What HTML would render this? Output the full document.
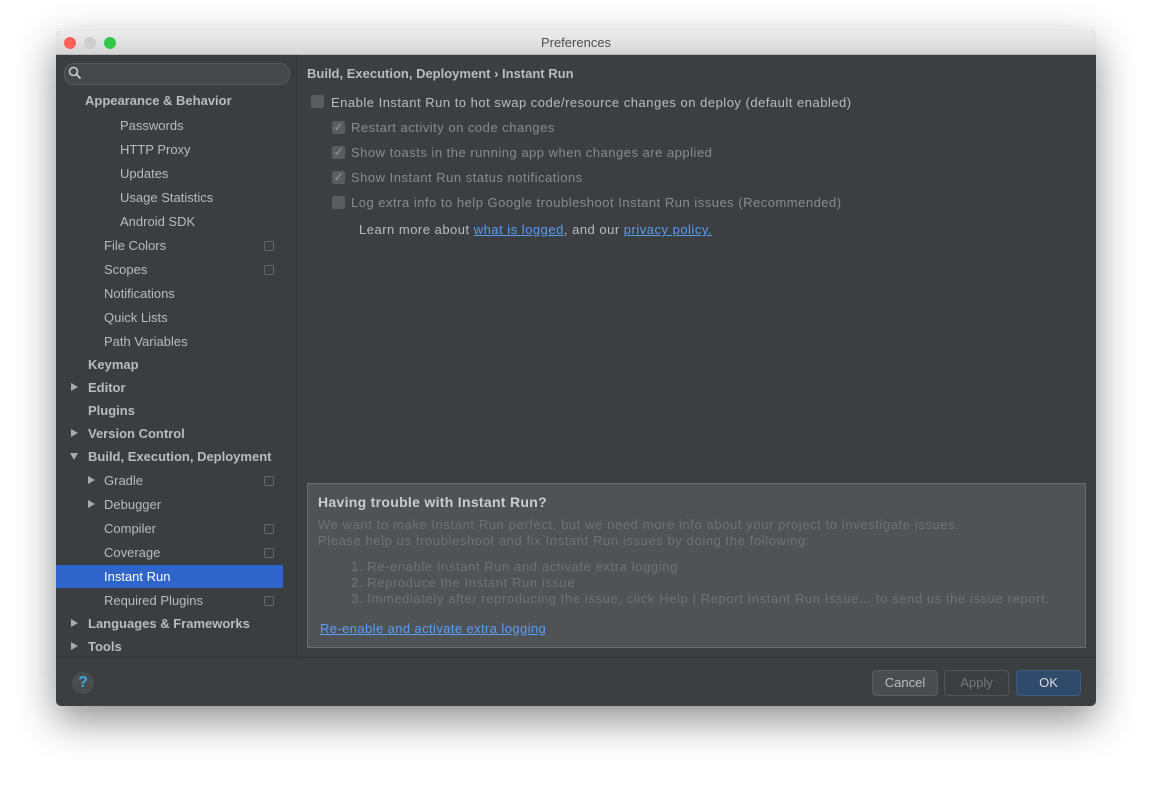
<!DOCTYPE html>
<html><head><style>
body{margin:0;width:1152px;height:786px;background:#fff;position:relative;font-family:"Liberation Sans",sans-serif;font-size:13px;overflow:hidden}
.win{position:absolute;left:56px;top:31px;width:1040px;height:675px;background:#3c3f41;border-radius:5px;box-shadow:0 14px 40px rgba(0,0,0,.45);overflow:hidden}
.title{position:absolute;left:0;top:0;width:1040px;height:23px;background:linear-gradient(#ececec,#d6d6d6);border-bottom:1px solid #b5b5b5;text-align:center;line-height:23px;color:#4d4d4d;font-size:13px}
.dot{position:absolute;top:6px;width:12px;height:12px;border-radius:50%}
.side{position:absolute;left:0;top:24px;width:240px;height:602px;background:#3b3e40}
.sep{position:absolute;left:240px;top:24px;width:1px;height:602px;background:#2f3133}
.t{position:absolute;color:#bbbbbb;white-space:nowrap}
.b{font-weight:bold}
.m{letter-spacing:0.5px}
.arr{position:absolute;width:0;height:0;border-left:7px solid #aaa;border-top:4px solid transparent;border-bottom:4px solid transparent}
.arrd{position:absolute;width:0;height:0;border-top:7px solid #aaa;border-left:4px solid transparent;border-right:4px solid transparent}
.ic{position:absolute;left:208px;width:8px;height:8px;border:1px solid #666;border-radius:2px}
.cb{position:absolute;width:13px;height:13px;background:#5a5d5f;border-radius:2px;color:#999;font-size:12px;line-height:13px;text-align:center}
.g{color:#8a8a8a}
a{color:#589df6;text-decoration:underline}
.box{position:absolute;left:251px;top:452px;width:777px;height:163px;background:#505355;border:1px solid #6a6d70}
.bx{color:#6f7274;font-size:13px;letter-spacing:0.6px}
.btn{position:absolute;top:639px;height:24px;border-radius:4px;text-align:center;line-height:24px;font-size:13px}
</style></head><body>
<div class="win">
<div class="title">Preferences
<div class="dot" style="left:8px;background:#fc605b"></div>
<div class="dot" style="left:28px;background:#cfcfcf"></div>
<div class="dot" style="left:48px;background:#34c84a"></div>
</div>
<div class="side">
<div style="position:absolute;left:8px;top:8px;width:224px;height:20px;border-radius:10px;background:#45484a;border:1px solid #55585a"></div>
<svg style="position:absolute;left:12px;top:11px" width="14" height="14"><circle cx="5.5" cy="5.5" r="4" stroke="#ccc" stroke-width="1.6" fill="none"/><line x1="8.5" y1="8.5" x2="12.5" y2="12.5" stroke="#ccc" stroke-width="1.8"/></svg>
<div style="position:absolute;left:0;top:510px;width:227px;height:23px;background:#2f65ca"></div>
</div>
<div class="sep"></div>
<div class="t b" style="left:29px;top:62px">Appearance &amp; Behavior</div>
<div class="t" style="left:64px;top:87px">Passwords</div>
<div class="t" style="left:64px;top:111px">HTTP Proxy</div>
<div class="t" style="left:64px;top:135px">Updates</div>
<div class="t" style="left:64px;top:159px">Usage Statistics</div>
<div class="t" style="left:64px;top:183px">Android SDK</div>
<div class="t" style="left:48px;top:207px">File Colors</div><div class="ic" style="top:210px"></div>
<div class="t" style="left:48px;top:231px">Scopes</div><div class="ic" style="top:234px"></div>
<div class="t" style="left:48px;top:255px">Notifications</div>
<div class="t" style="left:48px;top:279px">Quick Lists</div>
<div class="t" style="left:48px;top:303px">Path Variables</div>
<div class="t b" style="left:32px;top:326px">Keymap</div>
<div class="arr" style="left:15px;top:352px"></div><div class="t b" style="left:32px;top:349px">Editor</div>
<div class="t b" style="left:32px;top:372px">Plugins</div>
<div class="arr" style="left:15px;top:398px"></div><div class="t b" style="left:32px;top:395px">Version Control</div>
<div class="arrd" style="left:14px;top:422px"></div><div class="t b" style="left:32px;top:418px">Build, Execution, Deployment</div>
<div class="arr" style="left:32px;top:445px"></div><div class="t" style="left:48px;top:442px">Gradle</div><div class="ic" style="top:445px"></div>
<div class="arr" style="left:32px;top:469px"></div><div class="t" style="left:48px;top:466px">Debugger</div>
<div class="t" style="left:48px;top:490px">Compiler</div><div class="ic" style="top:493px"></div>
<div class="t" style="left:48px;top:514px">Coverage</div><div class="ic" style="top:517px"></div>
<div class="t" style="left:48px;top:538px;color:#fff">Instant Run</div>
<div class="t" style="left:48px;top:562px">Required Plugins</div><div class="ic" style="top:565px"></div>
<div class="arr" style="left:15px;top:588px"></div><div class="t b" style="left:32px;top:585px">Languages &amp; Frameworks</div>
<div class="arr" style="left:15px;top:611px"></div><div class="t b" style="left:32px;top:608px">Tools</div>

<div class="t b" style="left:251px;top:35px">Build, Execution, Deployment › Instant Run</div>
<div class="cb" style="left:255px;top:64px"></div><div class="t m" style="left:275px;top:64px">Enable Instant Run to hot swap code/resource changes on deploy (default enabled)</div>
<div class="cb" style="left:276px;top:90px">✓</div><div class="t g m" style="left:295px;top:89px">Restart activity on code changes</div>
<div class="cb" style="left:276px;top:115px">✓</div><div class="t g m" style="left:295px;top:114px">Show toasts in the running app when changes are applied</div>
<div class="cb" style="left:276px;top:140px">✓</div><div class="t g m" style="left:295px;top:139px">Show Instant Run status notifications</div>
<div class="cb" style="left:276px;top:165px"></div><div class="t g m" style="left:295px;top:164px">Log extra info to help Google troubleshoot Instant Run issues (Recommended)</div>
<div class="t m" style="left:303px;top:191px">Learn more about <a>what is logged</a>, and our <a>privacy policy.</a></div>

<div class="box">
<div class="t b" style="left:10px;top:10px;font-size:14px;color:#ccc;letter-spacing:0.3px">Having trouble with Instant Run?</div>
<div class="t bx" style="left:10px;top:33px">We want to make Instant Run perfect, but we need more info about your project to investigate issues.</div>
<div class="t bx" style="left:10px;top:49px">Please help us troubleshoot and fix Instant Run issues by doing the following:</div>
<div class="t bx" style="left:43px;top:75px">1. Re-enable Instant Run and activate extra logging</div>
<div class="t bx" style="left:43px;top:91px">2. Reproduce the Instant Run issue</div>
<div class="t bx" style="left:43px;top:107px">3. Immediately after reproducing the issue, click Help | Report Instant Run Issue... to send us the issue report.</div>
<div class="t" style="left:12px;top:137px;letter-spacing:0.4px"><a>Re-enable and activate extra logging</a></div>
</div>
<div style="position:absolute;left:0;top:626px;width:1040px;height:1px;background:#2f3133"></div>
<div style="position:absolute;left:16px;top:641px;width:22px;height:22px;border-radius:50%;background:#4a4d4f;color:#3da8e0;font-weight:bold;text-align:center;line-height:22px;font-size:16px">?</div>
<div class="btn" style="left:816px;width:64px;background:#4a4d4f;border:1px solid #5a5d5f;color:#bbb">Cancel</div>
<div class="btn" style="left:888px;width:63px;background:#3c3f41;border:1px solid #555;color:#777">Apply</div>
<div class="btn" style="left:960px;width:63px;background:#2f4a6b;border:1px solid #3d5c82;color:#ddd">OK</div>
</div>
</body></html>
